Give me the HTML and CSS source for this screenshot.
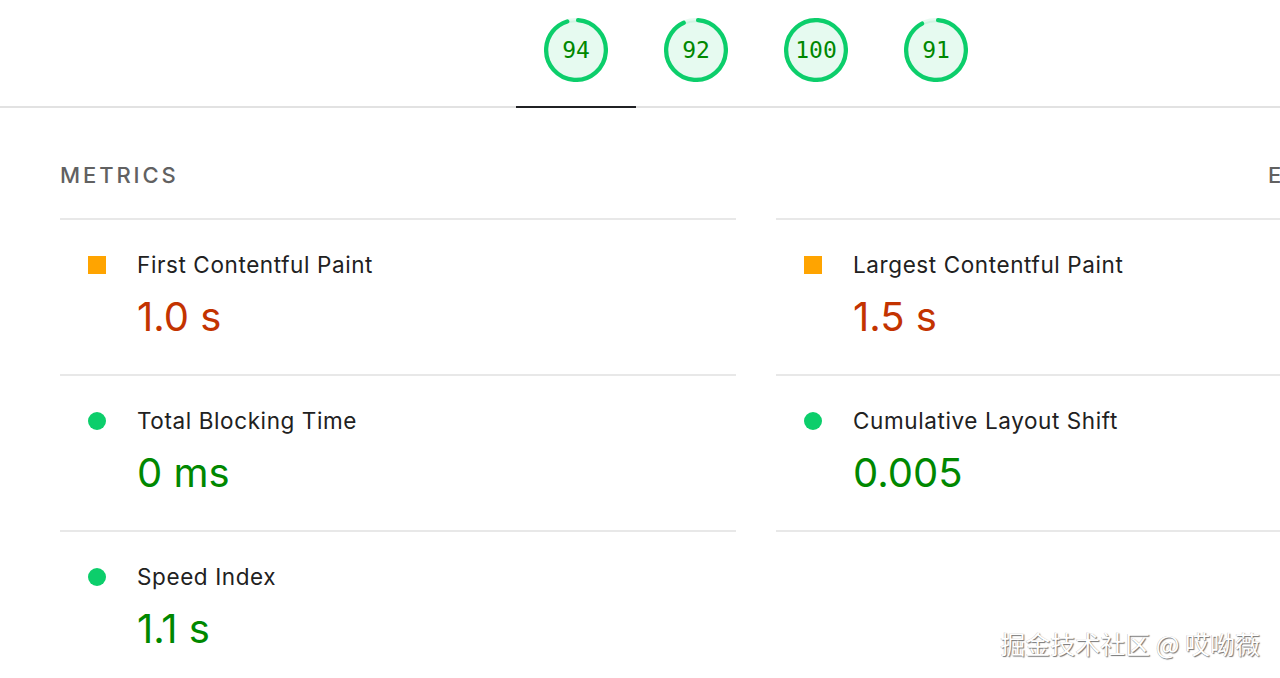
FILE: index.html
```html
<!DOCTYPE html>
<html lang="en">
<head>
<meta charset="utf-8">
<title>Lighthouse Report</title>
<link rel="stylesheet" href="styles.css">
</head>
<body>
<div class="page">
  <header class="topbar">
    <nav class="tabs">
      <a class="tab tab--active">
        <span class="gauge">
          <svg class="gauge__svg" viewBox="0 0 120 120">
            <circle class="gauge__base" cx="60" cy="60" r="56"></circle>
            <circle class="gauge__arc" cx="60" cy="60" r="56" stroke-dasharray="330.75 351.86"></circle>
          </svg>
          <span class="gauge__score">94</span>
        </span>
      </a>
      <a class="tab">
        <span class="gauge">
          <svg class="gauge__svg" viewBox="0 0 120 120">
            <circle class="gauge__base" cx="60" cy="60" r="56"></circle>
            <circle class="gauge__arc" cx="60" cy="60" r="56" stroke-dasharray="323.71 351.86"></circle>
          </svg>
          <span class="gauge__score">92</span>
        </span>
      </a>
      <a class="tab">
        <span class="gauge">
          <svg class="gauge__svg" viewBox="0 0 120 120">
            <circle class="gauge__base" cx="60" cy="60" r="56"></circle>
            <circle class="gauge__arc" cx="60" cy="60" r="56" stroke-dasharray="351.86 351.86"></circle>
          </svg>
          <span class="gauge__score">100</span>
        </span>
      </a>
      <a class="tab">
        <span class="gauge">
          <svg class="gauge__svg" viewBox="0 0 120 120">
            <circle class="gauge__base" cx="60" cy="60" r="56"></circle>
            <circle class="gauge__arc" cx="60" cy="60" r="56" stroke-dasharray="320.19 351.86"></circle>
          </svg>
          <span class="gauge__score">91</span>
        </span>
      </a>
    </nav>
  </header>

  <section class="metrics">
    <div class="metrics__header">
      <span class="metrics__title">Metrics</span>
      <span class="metrics__title">Expand view</span>
    </div>
    <div class="metrics__grid">
      <div class="metric metric--first">
        <span class="marker marker--average"></span>
        <div class="metric__body">
          <div class="metric__label">First Contentful Paint</div>
          <div class="metric__value metric__value--average">1.0&nbsp;s</div>
        </div>
      </div>
      <div class="metric metric--first">
        <span class="marker marker--average"></span>
        <div class="metric__body">
          <div class="metric__label">Largest Contentful Paint</div>
          <div class="metric__value metric__value--average">1.5&nbsp;s</div>
        </div>
      </div>
      <div class="metric">
        <span class="marker marker--pass"></span>
        <div class="metric__body">
          <div class="metric__label">Total Blocking Time</div>
          <div class="metric__value metric__value--pass">0&nbsp;ms</div>
        </div>
      </div>
      <div class="metric">
        <span class="marker marker--pass"></span>
        <div class="metric__body">
          <div class="metric__label">Cumulative Layout Shift</div>
          <div class="metric__value metric__value--pass">0.005</div>
        </div>
      </div>
      <div class="metric">
        <span class="marker marker--pass"></span>
        <div class="metric__body">
          <div class="metric__label">Speed Index</div>
          <div class="metric__value metric__value--pass">1.1&nbsp;s</div>
        </div>
      </div>
    </div>
  </section>
</div>
<div class="watermark">掘金技术社区 @ 哎呦薇</div>
</body>
</html>
```

FILE: styles.css
```css
html, body {
  margin: 0;
  padding: 0;
  background: #ffffff;
}

body {
  width: 1280px;
  height: 678px;
  overflow: hidden;
  position: relative;
  font-family: Inter, "Noto Sans", "Liberation Sans", sans-serif;
  color: #212121;
}

.page {
  width: 1512px;
}

.topbar {
  border-bottom: 2px solid #e2e2e2;
}

.tabs {
  display: flex;
  justify-content: center;
}

.tab {
  width: 120px;
  height: 108px;
  box-sizing: border-box;
  padding-top: 18px;
  display: flex;
  justify-content: center;
  align-items: flex-start;
  margin-bottom: -2px;
  border-bottom: 2px solid transparent;
}

.tab--active {
  border-bottom-color: #202124;
}

.gauge {
  display: grid;
  width: 64px;
  height: 64px;
}

.gauge__svg {
  grid-area: 1 / 1;
  width: 64px;
  height: 64px;
}

.gauge__base {
  fill: rgba(12, 206, 107, 0.1);
  stroke: rgba(12, 206, 107, 0.1);
  stroke-width: 8;
}

.gauge__arc {
  fill: none;
  stroke: #0cce6b;
  stroke-width: 8;
  stroke-linecap: round;
  transform: rotate(-86deg);
  transform-origin: 60px 60px;
}

.gauge__score {
  grid-area: 1 / 1;
  align-self: center;
  justify-self: center;
  font-family: "DejaVu Sans Mono", "Liberation Mono", monospace;
  font-size: 23px;
  line-height: 1;
  color: #008800;
}

.metrics {
  padding: 52px 60px 0;
}

.metrics__header {
  display: flex;
  justify-content: space-between;
  margin-bottom: 28px;
}

.metrics__title {
  font-size: 22px;
  line-height: 30px;
  font-weight: 500;
  letter-spacing: 2.9px;
  text-transform: uppercase;
  color: #616161;
}

.metrics__grid {
  display: grid;
  grid-template-columns: 1fr 1fr;
  column-gap: 40px;
}

.metric {
  display: flex;
  align-items: flex-start;
  height: 156px;
  box-sizing: border-box;
  padding-left: 28px;
  padding-top: 30px;
  border-bottom: 2px solid #e8e8e8;
}

.metric--first {
  border-top: 2px solid #e8e8e8;
  height: 158px;
}

.marker {
  flex: none;
  width: 18px;
  height: 18px;
  margin-top: 6px;
  margin-right: 31px;
}

.marker--average {
  background: #ffa400;
}

.marker--pass {
  background: #0cce6b;
  border-radius: 50%;
}

.metric__label {
  font-size: 22.5px;
  line-height: 30px;
  letter-spacing: 0.6px;
  color: #212121;
}

.metric__value {
  margin-top: 13px;
  font-size: 40px;
  line-height: 48px;
}

.metric__value--average {
  color: #c33300;
}

.metric__value--pass {
  color: #008800;
}

.watermark {
  position: absolute;
  right: 20px;
  bottom: 20px;
  font-family: "Noto Sans CJK SC", "Noto Sans", sans-serif;
  font-size: 25px;
  line-height: 30px;
  color: #ffffff;
  text-shadow: 1px 1px 1px rgba(0, 0, 0, 0.55), -0.5px -0.5px 0.5px rgba(0, 0, 0, 0.25);
}
```
